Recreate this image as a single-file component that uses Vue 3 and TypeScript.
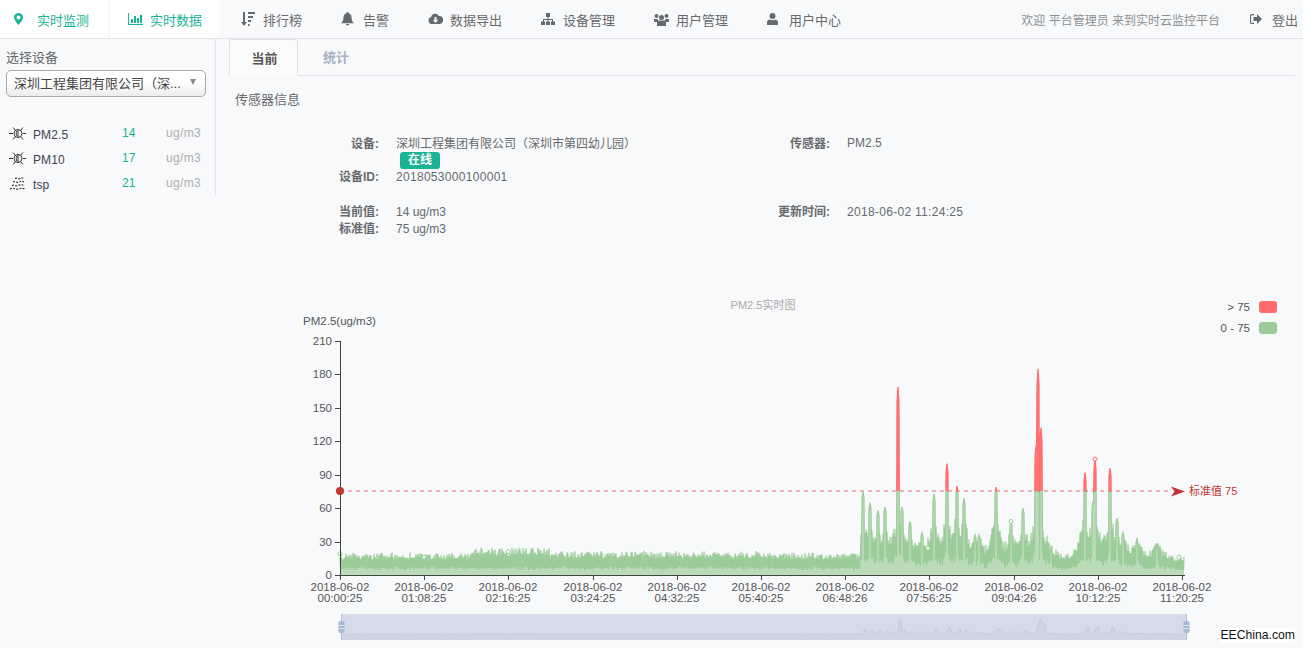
<script setup lang="ts">
interface NavItem { label: string; icon: string; active?: boolean; teal?: boolean }
const navItems: NavItem[] = [
  { label: '实时监测', icon: 'marker', teal: true },
  { label: '实时数据', icon: 'bars', teal: true, active: true },
  { label: '排行榜', icon: 'sort' },
  { label: '告警', icon: 'bell' },
  { label: '数据导出', icon: 'cloud' },
  { label: '设备管理', icon: 'sitemap' },
  { label: '用户管理', icon: 'users' },
  { label: '用户中心', icon: 'user' },
]
const sensors = [
  { name: 'PM2.5', value: 14, kind: 'dust' },
  { name: 'PM10', value: 17, kind: 'dust' },
  { name: 'tsp', value: 21, kind: 'cloud' },
]

const X0 = 340, X1 = 1184, Y0 = 575, SCALE = 234 / 210
const toY = (v: number) => Y0 - v * SCALE

let seed = 20180602
const rnd = () => {
  seed = (seed + 0x6d2b79f5) | 0
  let t = Math.imul(seed ^ (seed >>> 15), 1 | seed)
  t = (t + Math.imul(t ^ (t >>> 7), 61 | t)) ^ t
  return ((t ^ (t >>> 14)) >>> 0) / 4294967296
}

const peaks: [number, number][] = [
  [863, 75], [870, 65], [878, 58], [885, 61], [898, 169], [902, 61], [910, 48], [922, 38], [934, 73],
  [947, 100], [957, 80], [964, 69], [975, 36], [979, 36], [996, 79], [1011, 48], [1023, 60],
  [1036, 116], [1038, 185], [1041, 132], [1051, 22], [1085, 92], [1093, 66], [1095, 104],
  [1110, 96], [1117, 51], [1123, 38], [1137, 30], [1157, 24],
]

const pts: { x: number; v: number }[] = []
for (let x = X0; x <= X1; x += 0.5) {
  const hump = x > 470 && x < 550 ? 5 : x > 550 && x < 760 ? 1.5 : x > 1140 ? -2 : 0
  let hi = 18.5 + hump + rnd() * 2
  let lo = 5 + rnd() * 2
  let spread = 0.72
  if (x > 860) {
    let shoulder = 0
    for (const [px, pv] of peaks) {
      const d = Math.abs(x - px)
      shoulder = Math.max(shoulder, Math.min(pv, 75) * 0.62 * Math.exp(-d / 6.5))
    }
    hi = Math.max(hi, 17 + shoulder)
    lo = 5 + shoulder * 0.3
    spread = 0.7
  }
  const i = pts.length
  let v = i % 2 === 0 ? hi * (spread + rnd() * (1 - spread)) : lo * (0.75 + rnd() * 0.5)
  for (const [px, pv] of peaks) {
    const d = Math.abs(x - px)
    if (d <= 1) v = Math.max(v, pv * (1 - d * 0.08))
  }
  pts.push({ x, v })
}
const line = pts.map((p, i) => `${i ? 'L' : 'M'}${p.x} ${toY(p.v).toFixed(1)}`).join('')
const areaPath = `${line}L${X1} ${Y0}L${X0} ${Y0}Z`
const shadowStep = pts.filter((_, i) => i % 2 === 0)
const shadowLine = shadowStep.map((p, i) => `${i ? 'L' : 'M'}${(341 + (p.x - X0) * (846 / 844)).toFixed(1)} ${(636 - p.v * 0.095).toFixed(1)}`).join('')
const shadowArea = `${shadowLine}L1187 640L341 640Z`

const xLabels = ['00:00:25', '01:08:25', '02:16:25', '03:24:25', '04:32:25', '05:40:25', '06:48:26', '07:56:25', '09:04:26', '10:12:25', '11:20:25']
const xTicks = xLabels.map((t, i) => ({ t, x: Math.round(340 + 84.2 * i) }))
const yTicks = [0, 30, 60, 90, 120, 150, 180, 210].map(v => ({ v, y: Math.round(toY(v)) }))
const dots = [
  { x: 340, v: 19 }, { x: 424, v: 16 }, { x: 508, v: 21 }, { x: 928, v: 24 },
  { x: 1011, v: 48 }, { x: 1095, v: 104, red: true }, { x: 1179, v: 16 },
]
</script>

<template>
  <div class="page">
    <header class="nav">
      <a v-for="item in navItems" :key="item.label" class="nav-item" :class="{ active: item.active, teal: item.teal }">
        <span class="nav-icon">
          <svg v-if="item.icon === 'marker'" width="9" height="12" viewBox="0 0 9 12"><path fill="currentColor" fill-rule="evenodd" d="M4.5 0A4.5 4.5 0 0 0 0 4.5C0 7 4.5 12 4.5 12S9 7 9 4.5A4.5 4.5 0 0 0 4.5 0Zm0 6.4a2 2 0 1 1 0-4 2 2 0 0 1 0 4Z"/></svg>
          <svg v-else-if="item.icon === 'bars'" width="15" height="12" viewBox="0 0 15 12"><path fill="currentColor" d="M0 0h1v11h14v1H0zM3 6h2v4H3zM6 3h2v7H6zM9 5h2v5H9zM12 2h2v8h-2z"/></svg>
          <svg v-else-if="item.icon === 'sort'" width="14" height="14" viewBox="0 0 14 14"><path fill="currentColor" d="M2 0h2v10h2l-3 4-3-4h2zM7 0h7v2H7zM7 4h5v2H7zM7 8h3v2H7zM7 12h1.500v2H7z"/></svg>
          <svg v-else-if="item.icon === 'bell'" width="13" height="14" viewBox="0 0 13 14"><path fill="currentColor" d="M6.500 0c.6 0 1 .4 1 1v.3c2 .4 3 2 3 4 0 3 .8 4.500 2.500 6H0c1.700-1.500 2.500-3 2.500-6 0-2 1-3.600 3-4V1c0-.6.400-1 1-1ZM5 12h3a1.500 1.500 0 0 1-3 0Z"/></svg>
          <svg v-else-if="item.icon === 'cloud'" width="15" height="12" viewBox="0 0 15 12"><path fill="currentColor" fill-rule="evenodd" d="M4 11a3.500 3.500 0 0 1-.8-6.900A4 4 0 0 1 10.800 3 4 4 0 0 1 11.500 11ZM6.500 4v3H4.800l2.700 3 2.700-3H8.500V4Z"/></svg>
          <svg v-else-if="item.icon === 'sitemap'" width="14" height="12" viewBox="0 0 14 12"><path fill="currentColor" d="M5 0h4v4H7.500v2H12v2.500h2V12h-4V8.500h1V7H7.500v1.500H9V12H5V8.500h1.500V7H3v1.500h1V12H0V8.500h2V6h4.500V4H5z"/></svg>
          <svg v-else-if="item.icon === 'users'" width="15" height="13" viewBox="0 0 15 13"><path fill="currentColor" d="M2.500 1a2 2 0 1 1 0 4 2 2 0 0 1 0-4Zm10 0a2 2 0 1 1 0 4 2 2 0 0 1 0-4ZM7.500 2a2.500 2.500 0 1 1 0 5 2.500 2.500 0 0 1 0-5ZM0 6h3.500l.6 1.200L3 9H0Zm15 0h-3.500l-.6 1.200L12 9h3ZM4.500 7.500h6c1 0 1.500 1 1.500 2V13H3V9.500c0-1 .5-2 1.500-2Z"/></svg>
          <svg v-else width="11" height="12" viewBox="0 0 11 12"><path fill="currentColor" d="M5.500 0a3 3 0 1 1 0 6 3 3 0 0 1 0-6ZM2.500 6.500c1.700 1 4.300 1 6 0 1.500.3 2.500 1.500 2.500 3V12H0V9.500c0-1.500 1-2.700 2.500-3Z"/></svg>
        </span>
        {{ item.label }}
      </a>
      <div class="nav-right">
        <span class="welcome">欢迎 平台管理员 来到实时云监控平台</span>
        <a class="logout">
          <svg width="12" height="10" viewBox="0 0 12 10"><path fill="#676a6c" d="M7 0 12 5 7 10V7H3.500V3H7Z"/><path fill="none" stroke="#676a6c" stroke-width="1.200" d="M4 .6H1.500a1 1 0 0 0-1 1v6.800a1 1 0 0 0 1 1H4"/></svg>
          <span>登出</span>
        </a>
      </div>
    </header>

    <div class="body">
      <aside class="side">
        <div class="side-label">选择设备</div>
        <div class="select">
          <span class="select-text">深圳工程集团有限公司（深...</span>
          <i class="caret"></i>
        </div>
        <ul class="sensors">
          <li v-for="s in sensors" :key="s.name" class="sensor">
            <svg class="sensor-icon" width="17" height="15" viewBox="0 0 17 15" fill="none" stroke="#333">
              <template v-if="s.kind === 'dust'">
                <circle cx="9" cy="7.500" r="4" />
                <path d="M9 3.500v8M8 5c-1 1.500-1 3.500 0 5M0 7.500h4M14 7.500h3M4 1.500l2.500 3M14 1.500l-2.500 3M4 13.500l2.500-3M14 13.500l-2.500-3" />
              </template>
              <template v-else>
                <path stroke-width="1.200" stroke-dasharray="2 1.200" d="M1 13c3-2 5 1 8 0s5-1 7 0M3 9.500c2-1 4 1 6 0s4-1 6 0M4 6c2-1 4 1 6 0s3-1 5 0M6 2.500c2-1 3 1 5 0s2-1 3 0" />
              </template>
            </svg>
            <span class="sensor-name">{{ s.name }}</span>
            <span class="sensor-value">{{ s.value }}</span>
            <span class="sensor-unit">ug/m3</span>
          </li>
        </ul>
      </aside>

      <main class="main">
        <div class="tabs">
          <div class="tab current">当前</div>
          <div class="tab">统计</div>
        </div>
        <h5 class="section">传感器信息</h5>
        <div class="info">
          <div class="k first">设备:</div>
          <div class="v first">
            深圳工程集团有限公司（深圳市第四幼儿园）
            <div class="badge-row"><span class="badge">在线</span></div>
          </div>
          <div class="k first">传感器:</div>
          <div class="v">PM2.5</div>

          <div class="k">设备ID:</div>
          <div class="v num">2018053000100001</div>
          <div></div>
          <div></div>

          <div class="k gap">当前值:</div>
          <div class="v gap">14 ug/m3</div>
          <div class="k gap">更新时间:</div>
          <div class="v gap num">2018-06-02 11:24:25</div>

          <div class="k">标准值:</div>
          <div class="v">75 ug/m3</div>
          <div></div>
          <div></div>
        </div>

        <svg class="chart" width="1087" height="356" viewBox="216 292 1087 356">
          <defs>
            <linearGradient id="lineGrad" gradientUnits="userSpaceOnUse" x1="0" y1="341" x2="0" y2="575">
              <stop offset="0.641" stop-color="#ff6b6b" />
              <stop offset="0.641" stop-color="#9ccc99" />
            </linearGradient>
            <linearGradient id="areaGrad" gradientUnits="userSpaceOnUse" x1="0" y1="341" x2="0" y2="575">
              <stop offset="0.641" stop-color="#ff7676" />
              <stop offset="0.641" stop-color="#bbdab8" />
            </linearGradient>
          </defs>

          <text x="763" y="309" class="title" text-anchor="middle">PM2.5实时图</text>
          <text x="339.500" y="325" class="axis-text" text-anchor="middle">PM2.5(ug/m3)</text>

          <text x="1250" y="311" class="axis-text" text-anchor="end">&gt; 75</text>
          <rect x="1259" y="301" width="18" height="12" rx="3" fill="#ff6b6b" />
          <text x="1250" y="332" class="axis-text" text-anchor="end">0 - 75</text>
          <rect x="1259" y="322" width="18" height="12" rx="3" fill="#9ccc99" />

          <path :d="areaPath" fill="url(#areaGrad)" />
          <path :d="line" fill="none" stroke="url(#lineGrad)" stroke-width="1.200" />

          <g v-for="d in dots" :key="d.x">
            <circle :cx="d.x" :cy="toY(d.v)" r="2" fill="#f8f9fb" :stroke="d.red ? '#ff6b6b' : '#9ccc99'" />
          </g>

          <line x1="340.500" y1="341" x2="340.500" y2="575" stroke="#444" />
          <line x1="340" y1="575.500" x2="1185" y2="575.500" stroke="#444" />
          <g v-for="t in yTicks" :key="t.v">
            <line x1="335" :y1="t.y + 0.5" x2="340" :y2="t.y + 0.5" stroke="#444" />
            <text x="332" :y="t.y + 4" class="axis-text" text-anchor="end">{{ t.v }}</text>
          </g>
          <g v-for="t in xTicks" :key="t.t">
            <line :x1="t.x + 0.5" y1="575" :x2="t.x + 0.5" y2="580" stroke="#444" />
            <text :x="t.x" y="591" class="axis-text" text-anchor="middle">2018-06-02</text>
            <text :x="t.x" y="602" class="axis-text" text-anchor="middle">{{ t.t }}</text>
          </g>

          <line x1="340" y1="491" x2="1172" y2="491" stroke="#e8686c" stroke-dasharray="4 4" />
          <circle cx="340" cy="491" r="4" fill="#c23531" />
          <path d="M1171 486.500 1185 491.500 1171 496.500 1174.500 491.500Z" fill="#c23531" />
          <text x="1189" y="495" class="mark-text">标准值 75</text>

          <rect x="341" y="614" width="846" height="26" fill="#d5dbe8" />
          <path :d="shadowArea" fill="#ced4e2" />
          <path :d="shadowLine" fill="none" stroke="#bcc2d0" stroke-width="0.600" />
          <line x1="341.500" y1="614" x2="341.500" y2="640" stroke="#b4c2d8" />
          <line x1="1186.500" y1="614" x2="1186.500" y2="640" stroke="#b4c2d8" />
          <g v-for="hx in [341.500, 1186.500]" :key="hx">
            <rect :x="hx - 3" y="621" width="6" height="12" rx="1.500" fill="#a7bbd7" />
            <path :d="`M${hx - 2} 625.500h4M${hx - 2} 628.500h4`" stroke="#e8edf5" />
          </g>
        </svg>
      </main>
    </div>
    <div class="watermark">EEChina.com</div>
  </div>
</template>

<style>
html, body { margin: 0; padding: 0; background: #f8f9fb; overflow: hidden; }
</style>

<style scoped>
.page {
  position: relative;
  width: 1303px;
  height: 648px;
  overflow: hidden;
  background: #f8f9fb;
  color: #676a6c;
  font-family: "Liberation Sans", "Noto Sans CJK SC", sans-serif;
  font-size: 12px;
}
.nav {
  display: flex;
  height: 38px;
  border-bottom: 1px solid #e3e5e8;
}
.nav-item {
  display: flex;
  align-items: center;
  padding: 0 18px 0 20px;
  font-size: 13px;
  color: #676a6c;
}
.nav-item:first-child { padding: 0 19px 0 14px; background: #fff; }
.nav-item.active { padding: 0 18px 0 18px; margin-left: 2px; background: #fff; }
.nav-item.teal { color: #1ab394; }
.nav-icon { display: flex; align-items: center; width: 23px; flex: none; }
.nav-item:not(.teal) .nav-icon svg { margin-left: 1px; }
.nav-item.active .nav-icon { width: 22px; }
.nav-right { display: flex; align-items: center; margin-left: auto; }
.welcome { color: #8c8f91; font-size: 12px; margin-right: 30px; }
.logout { display: flex; align-items: center; gap: 10px; font-size: 13px; margin-right: 5px; }
.body { display: flex; align-items: flex-start; }
.side {
  box-sizing: border-box;
  width: 216px;
  height: 157px;
  flex: none;
  border-right: 1px solid #e3e5e8;
  padding: 11px 9px 0 6px;
}
.side-label { font-size: 13px; line-height: 16px; }
.select {
  box-sizing: border-box;
  display: flex;
  align-items: center;
  justify-content: space-between;
  height: 27px;
  margin-top: 4px;
  padding: 0 9px 3px 7px;
  border: 1px solid #a9a9a9;
  border-radius: 5px;
  background: linear-gradient(#fff, #fff 45%, #ececec);
  color: #444;
  font-size: 13px;
  width: 200px;
}
.caret {
  width: 0;
  height: 0;
  border-left: 3.500px solid transparent;
  border-right: 3.500px solid transparent;
  border-top: 6px solid #888;
}
.sensors { list-style: none; margin: 24px 0 0; padding: 0; }
.sensor {
  display: flex;
  align-items: center;
  height: 25px;
  font-size: 12px;
}
.sensor-icon { margin-left: 3px; flex: none; }
.sensor-name { width: 89px; margin-left: 7px; color: #3f4250; font-size: 12px; padding-top: 3px; letter-spacing: .1px; }
.sensor-value { width: 44px; color: #1ab394; padding-bottom: 2px; }
.sensor-unit { color: #aeaeae; letter-spacing: .35px; padding-bottom: 2px; }
.main { flex: 1; min-width: 0; }
.tabs {
  display: flex;
  height: 36px;
  margin: 0 8px 0 13px;
  border-bottom: 1px solid #dfe1e6;
}
.tab {
  box-sizing: border-box;
  height: 37px;
  padding: 0 25px;
  line-height: 38px;
  font-size: 13px;
  font-weight: 700;
  color: #a7b1c2;
}
.tab.current {
  width: 69px;
  padding: 0 0 0 2px;
  text-align: center;
  color: #555;
  background: #fbfbfc;
  border: 1px solid #dfe1e6;
  border-bottom-color: #fbfbfc;
  border-radius: 3px 3px 0 0;
}
.section {
  margin: 16px 0 0 19px;
  font-size: 13px;
  font-weight: 400;
  line-height: 16px;
  color: #676a6c;
}
.info {
  display: grid;
  grid-template-columns: 163px 283px 134px 1fr;
  column-gap: 17px;
  margin-top: 27px;
  line-height: 17px;
  font-size: 12px;
}
.k { text-align: right; font-weight: 700; color: #676a6c; }
.v { color: #676a6c; }
.first { padding-top: 1px; }
.badge-row { margin-top: -1px; }
.num { letter-spacing: .3px; }
.gap { margin-top: 18px; }
.badge {
  display: inline-block;
  width: 40px;
  height: 17px;
  margin-left: 4px;
  border-radius: 3px;
  background: #1ab394;
  color: #fff;
  font-weight: 700;
  text-align: center;
  line-height: 17px;
}
.chart { display: block; margin-top: 54px; }
.axis-text { font-size: 11.500px; fill: #555; }
.title { font-size: 11px; fill: #aaa; }
.mark-text { font-size: 11px; fill: #c23531; }
.watermark {
  position: absolute;
  right: 8px;
  bottom: 5px;
  font-size: 12.200px;
  line-height: 15px;
  color: #111;
  background: #fff;
}
</style>
